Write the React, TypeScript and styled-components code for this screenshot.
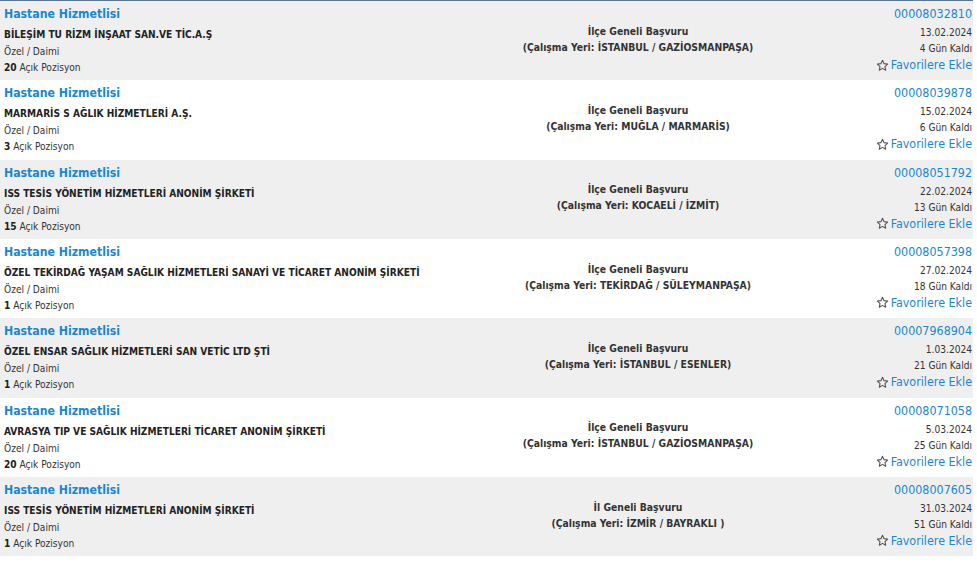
import React from "react";
import styled, { createGlobalStyle } from "styled-components";

const Global = createGlobalStyle`
  html, body { margin: 0; padding: 0; background: #fff; }
  body { font-family: "DejaVu Sans Condensed", "DejaVu Sans", Tahoma, Verdana, sans-serif; font-stretch: condensed; color: #333; }
`;

type Job = {
  company: string;
  count: number;
  scope: string;
  place: string;
  no: string;
  date: string;
  days: number;
};

const jobs: Job[] = [
  { company: "BİLEŞİM TU RİZM İNŞAAT SAN.VE TİC.A.Ş", count: 20, scope: "İlçe Geneli Başvuru", place: "İSTANBUL / GAZİOSMANPAŞA", no: "00008032810", date: "13.02.2024", days: 4 },
  { company: "MARMARİS S AĞLIK HİZMETLERİ A.Ş.", count: 3, scope: "İlçe Geneli Başvuru", place: "MUĞLA / MARMARİS", no: "00008039878", date: "15.02.2024", days: 6 },
  { company: "ISS TESİS YÖNETİM HİZMETLERİ ANONİM ŞİRKETİ", count: 15, scope: "İlçe Geneli Başvuru", place: "KOCAELİ / İZMİT", no: "00008051792", date: "22.02.2024", days: 13 },
  { company: "ÖZEL TEKİRDAĞ YAŞAM SAĞLIK HİZMETLERİ SANAYİ VE TİCARET ANONİM ŞİRKETİ", count: 1, scope: "İlçe Geneli Başvuru", place: "TEKİRDAĞ / SÜLEYMANPAŞA", no: "00008057398", date: "27.02.2024", days: 18 },
  { company: "ÖZEL ENSAR SAĞLIK HİZMETLERİ SAN VETİC LTD ŞTİ", count: 1, scope: "İlçe Geneli Başvuru", place: "İSTANBUL / ESENLER", no: "00007968904", date: "1.03.2024", days: 21 },
  { company: "AVRASYA TIP VE SAĞLIK HİZMETLERİ TİCARET ANONİM ŞİRKETİ", count: 20, scope: "İlçe Geneli Başvuru", place: "İSTANBUL / GAZİOSMANPAŞA", no: "00008071058", date: "5.03.2024", days: 25 },
  { company: "ISS TESİS YÖNETİM HİZMETLERİ ANONİM ŞİRKETİ", count: 1, scope: "İl Geneli Başvuru", place: "İZMİR / BAYRAKLI ", no: "00008007605", date: "31.03.2024", days: 51 },
];

const Page = styled.div`
  width: 973px;
  border-top: 1px solid #5b7594;
`;

const Row = styled.div<{ $alt: boolean }>`
  display: grid;
  grid-template-columns: 466px 336px 1fr;
  height: 79.33px;
  box-sizing: border-box;
  padding: 4px 1px 0 4px;
  background: ${(p) => (p.$alt ? "#efefef" : "#ffffff")};
`;

const Left = styled.div`
  display: flex;
  flex-direction: column;
  min-width: 0;
`;

const Title = styled.a`
  font-size: 12.2px;
  font-weight: bold;
  line-height: 18px;
  color: #1b87cf;
  text-decoration: none;
  margin-bottom: 3px;
`;

const Company = styled.div`
  font-size: 10.1px;
  font-weight: bold;
  line-height: 17px;
  color: #222;
  white-space: nowrap;
`;

const Small = styled.div<{ $last?: boolean }>`
  font-size: 10.1px;
  line-height: ${(p) => (p.$last ? "15px" : "17px")};
  color: #333;
  b { color: #222; }
`;

const Middle = styled.div`
  display: flex;
  flex-direction: column;
  justify-content: center;
  align-items: center;
  padding-bottom: 8px;
  font-size: 10.3px;
  font-weight: bold;
  line-height: 16px;
  color: #333;
  white-space: pre;
`;

const Right = styled.div`
  display: flex;
  flex-direction: column;
  align-items: flex-end;
`;

const Number = styled.a`
  font-size: 12.4px;
  line-height: 18px;
  color: #1b87cf;
  margin-bottom: 2px;
`;

const Meta = styled.div`
  font-size: 10.1px;
  line-height: 16px;
  color: #333;
`;

const Fav = styled.a`
  display: flex;
  align-items: center;
  gap: 2px;
  margin-top: -1px;
  font-size: 12.4px;
  line-height: 18px;
  color: #1b87cf;
  cursor: pointer;
`;

const Star = () => (
  <svg width="13" height="13" viewBox="0 0 24 24" fill="none" stroke="#555" strokeWidth="2" strokeLinejoin="round">
    <path d="M12 2.5l2.9 6.1 6.6.8-4.9 4.6 1.3 6.6L12 17.3l-5.9 3.3 1.3-6.6-4.9-4.6 6.6-.8z" />
  </svg>
);

export default function App() {
  return (
    <>
      <Global />
      <Page>
        {jobs.map((j, i) => (
          <Row key={j.no} $alt={i % 2 === 0}>
            <Left>
              <Title>Hastane Hizmetlisi</Title>
              <Company>{j.company}</Company>
              <Small>Özel / Daimi</Small>
              <Small $last>
                <b>{j.count}</b> Açık Pozisyon
              </Small>
            </Left>
            <Middle>
              <div>{j.scope}</div>
              <div>(Çalışma Yeri: {j.place})</div>
            </Middle>
            <Right>
              <Number>{j.no}</Number>
              <Meta>{j.date}</Meta>
              <Meta>{j.days} Gün Kaldı</Meta>
              <Fav>
                <Star />
                Favorilere Ekle
              </Fav>
            </Right>
          </Row>
        ))}
      </Page>
    </>
  );
}
